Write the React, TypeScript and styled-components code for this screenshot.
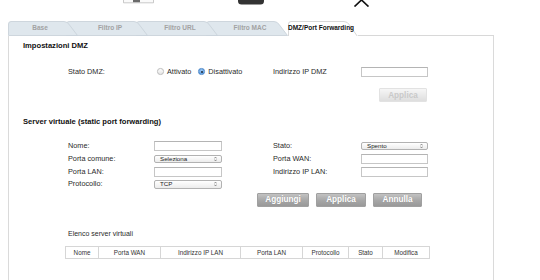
import React from "react";
import styled, { createGlobalStyle } from "styled-components";

const Global = createGlobalStyle`
  html, body { margin: 0; padding: 0; background: #fff; }
  body { font-family: "Liberation Sans", Arial, Helvetica, sans-serif; color: #222; }
  * { box-sizing: border-box; }
`;

const Page = styled.div`
  width: 540px;
  height: 280px;
  overflow: hidden;
  background: #fff;
`;

const TopStrip = styled.div`
  height: 21px;
  display: flex;
  align-items: flex-start;
`;

const TopIcon = styled.svg<{ $x: number }>`
  display: block;
  flex: none;
  margin-left: ${(p) => p.$x}px;
`;

const TabBar = styled.div`
  display: flex;
  margin-left: 8px;
  width: 486px;
  height: 15px;
`;

const Tab = styled.div<{ $overlap: boolean; $z: number }>`
  display: grid;
  flex: none;
  width: ${(p) => (p.$overlap ? 82 : 70)}px;
  height: 15px;
  margin-left: ${(p) => (p.$overlap ? -12 : 0)}px;
  z-index: ${(p) => p.$z};
  & > * { grid-area: 1 / 1; }
`;

const TabShape = styled.svg`
  display: block;
`;

const TabLabel = styled.span<{ $active: boolean; $overlap: boolean }>`
  align-self: center;
  justify-self: center;
  padding-left: ${(p) => (p.$overlap ? 12 : 0)}px;
  padding-right: 6px;
  font-size: 6.5px;
  font-weight: bold;
  color: ${(p) => (p.$active ? "#111" : "#a2a2a2")};
  white-space: nowrap;
  line-height: 1;
`;

const TabFiller = styled.div`
  flex: 1;
  border-bottom: 1px solid #d8d8d8;
`;

const Panel = styled.div`
  margin-left: 8px;
  width: 486px;
  height: 244px;
  border-left: 1px solid #dadada;
  border-right: 1px solid #dadada;
  padding-left: 14px;
  display: flex;
  flex-direction: column;
`;

const Heading = styled.div<{ $top: number }>`
  margin-top: ${(p) => p.$top}px;
  font-size: 7.6px;
  font-weight: bold;
  color: #111;
  line-height: 10px;
  height: 10px;
`;

const FormGrid = styled.div<{ $top: number }>`
  margin-top: ${(p) => p.$top}px;
  margin-left: 45px;
  display: grid;
  grid-template-columns: 86px 68px 51px 88px 67px;
  grid-auto-rows: 10px;
  row-gap: 2.8px;
  align-items: center;
`;

const Label = styled.span<{ $col: number }>`
  grid-column: ${(p) => p.$col};
  font-size: 7.3px;
  color: #2a2a2a;
  white-space: nowrap;
  line-height: 10px;
`;

const TextInput = styled.div<{ $col: number }>`
  grid-column: ${(p) => p.$col};
  height: 10px;
  border: 1px solid #c6c6c6;
  border-top-color: #b4b4b4;
  background: #fff;
`;

const Select = styled.div<{ $col: number; $h: number }>`
  grid-column: ${(p) => p.$col};
  height: ${(p) => p.$h}px;
  border: 1px solid #b2b2b2;
  border-radius: 2px;
  background: linear-gradient(#ffffff, #ececec);
  display: flex;
  align-items: center;
  justify-content: space-between;
  padding: 0 4px 0 5px;
  font-size: 6.2px;
  color: #222;
  line-height: 1;
`;

const RadioGroup = styled.div`
  grid-column: 2 / span 2;
  display: flex;
  align-items: center;
  padding-left: 3px;
`;

const Radio = styled.span<{ $checked: boolean }>`
  width: 6.5px;
  height: 6.5px;
  border-radius: 50%;
  flex: none;
  display: flex;
  align-items: center;
  justify-content: center;
  border: 0.8px solid ${(p) => (p.$checked ? "#4c86c8" : "#bcbcbc")};
  background: ${(p) =>
    p.$checked
      ? "radial-gradient(circle at 50% 35%, #9cc8f2, #4f95de)"
      : "linear-gradient(#fdfdfd, #e6e6e6)"};
  &::after {
    content: "";
    width: 2px;
    height: 2px;
    border-radius: 50%;
    background: ${(p) => (p.$checked ? "#1d2a3a" : "transparent")};
  }
`;

const RadioText = styled.span<{ $gap: number }>`
  font-size: 7.3px;
  color: #2a2a2a;
  margin-left: 3.5px;
  margin-right: ${(p) => p.$gap}px;
  white-space: nowrap;
`;

const ButtonRow = styled.div<{ $top: number; $width: number }>`
  margin-top: ${(p) => p.$top}px;
  margin-left: 45px;
  width: ${(p) => p.$width}px;
  display: flex;
  justify-content: flex-end;
  gap: 7px;
`;

const Button = styled.div<{ $w: number; $disabled?: boolean }>`
  width: ${(p) => p.$w}px;
  height: 14px;
  display: flex;
  align-items: center;
  justify-content: center;
  font-size: 8.2px;
  font-weight: bold;
  border-radius: 1px;
  color: ${(p) => (p.$disabled ? "#c9c9c9" : "#fff")};
  background: ${(p) =>
    p.$disabled
      ? "linear-gradient(#f6f6f6, #dedede)"
      : "linear-gradient(#c2c2c2, #a6a6a6 55%, #999999)"};
  border: 1px solid ${(p) => (p.$disabled ? "#e2e2e2" : "#a0a0a0")};
  text-shadow: ${(p) => (p.$disabled ? "none" : "0 0 1px rgba(0,0,0,0.15)")};
`;

const Caption = styled.div`
  margin-top: 22px;
  margin-left: 45px;
  font-size: 7px;
  color: #2a2a2a;
  line-height: 10px;
`;

const ListTable = styled.table`
  margin-top: 7px;
  margin-left: 42px;
  border-collapse: collapse;
  table-layout: fixed;
  width: 364px;
`;

const HeadCell = styled.th<{ $w: number }>`
  width: ${(p) => p.$w}px;
  height: 12px;
  padding: 0;
  border: 1px solid #d6d6d6;
  font-size: 6.3px;
  font-weight: normal;
  color: #333;
  text-align: center;
  white-space: nowrap;
`;

const SelectArrows = () => (
  <svg width="3" height="6" viewBox="0 0 3 6">
    <path d="M0.4 2.4 L1.5 1 L2.6 2.4 M0.4 3.6 L1.5 5 L2.6 3.6" fill="none" stroke="#555" strokeWidth="0.6" />
  </svg>
);

const tabs = ["Base", "Filtro IP", "Filtro URL", "Filtro MAC", "DMZ/Port Forwarding"];

function tabPath(w: number, closed: boolean) {
  const end = closed ? 14.5 : 15.5;
  return `M0.5 ${end} V3 Q0.5 0.5 3 0.5 H${w - 14} Q${w - 10.5} 0.5 ${w - 8.5} 4 L${w - 0.5} ${end}${closed ? " Z" : ""}`;
}

const columns: [string, number][] = [
  ["Nome", 33],
  ["Porta WAN", 62],
  ["Indirizzo IP LAN", 80],
  ["Porta LAN", 62],
  ["Protocollo", 46],
  ["Stato", 34],
  ["Modifica", 47],
];

export default function App() {
  return (
    <Page>
      <Global />
      <TopStrip>
        <TopIcon $x={123} width="31" height="4" viewBox="0 0 31 4">
          <path d="M0.5 -1 V2.8 H30.5 V-1" fill="#fafafa" stroke="#bdbdbd" strokeWidth="0.8" />
          <rect x="10" y="0" width="7" height="2.2" fill="#6a6a6a" />
        </TopIcon>
        <TopIcon $x={84} width="26" height="5" viewBox="0 0 26 5">
          <rect x="0" y="-4" width="26" height="8.5" rx="3.5" fill="#333" />
        </TopIcon>
        <TopIcon $x={89} width="17" height="7" viewBox="0 0 17 7">
          <path d="M8.5 0 L1.5 6.5 M8.5 0 L15.5 6.5" fill="none" stroke="#111" strokeWidth="1.7" />
        </TopIcon>
      </TopStrip>

      <TabBar>
        {tabs.map((t, i) => {
          const active = i === tabs.length - 1;
          const overlap = i > 0 && !active;
          const w = overlap ? 82 : 70;
          return (
            <Tab key={t} $overlap={overlap} $z={active ? 10 : 6 - i}>
              <TabShape width={w} height="15" viewBox={`0 0 ${w} 15`}>
                <path
                  d={tabPath(w, !active)}
                  fill={active ? "#ffffff" : "#dfe7ed"}
                  stroke={active ? "#d4d4d4" : "#c9d3da"}
                  strokeWidth="0.9"
                />
              </TabShape>
              <TabLabel $active={active} $overlap={overlap}>{t}</TabLabel>
            </Tab>
          );
        })}
        <TabFiller />
      </TabBar>

      <Panel>
        <Heading $top={4.5}>Impostazioni DMZ</Heading>

        <FormGrid $top={16}>
          <Label $col={1}>Stato DMZ:</Label>
          <RadioGroup>
            <Radio $checked={false} />
            <RadioText $gap={7}>Attivato</RadioText>
            <Radio $checked />
            <RadioText $gap={0}>Disattivato</RadioText>
          </RadioGroup>
          <Label $col={4}>Indirizzo IP DMZ</Label>
          <TextInput $col={5} />
        </FormGrid>

        <ButtonRow $top={11.5} $width={359}>
          <Button $w={48} $disabled>Applica</Button>
        </ButtonRow>

        <Heading $top={15}>Server virtuale (static port forwarding)</Heading>

        <FormGrid $top={14}>
          <Label $col={1}>Nome:</Label>
          <TextInput $col={2} />
          <Label $col={4}>Stato:</Label>
          <Select $col={5} $h={7.5}>
            <span>Spento</span>
            <SelectArrows />
          </Select>

          <Label $col={1}>Porta comune:</Label>
          <Select $col={2} $h={8.5}>
            <span>Seleziona</span>
            <SelectArrows />
          </Select>
          <Label $col={4}>Porta WAN:</Label>
          <TextInput $col={5} />

          <Label $col={1}>Porta LAN:</Label>
          <TextInput $col={2} />
          <Label $col={4}>Indirizzo IP LAN:</Label>
          <TextInput $col={5} />

          <Label $col={1}>Protocollo:</Label>
          <Select $col={2} $h={8.5}>
            <span>TCP</span>
            <SelectArrows />
          </Select>
        </FormGrid>

        <ButtonRow $top={3.6} $width={354}>
          <Button $w={52}>Aggiungi</Button>
          <Button $w={50}>Applica</Button>
          <Button $w={49}>Annulla</Button>
        </ButtonRow>

        <Caption>Elenco server virtuali</Caption>

        <ListTable>
          <thead>
            <tr>
              {columns.map(([c, w]) => (
                <HeadCell key={c} $w={w}>{c}</HeadCell>
              ))}
            </tr>
          </thead>
        </ListTable>
      </Panel>
    </Page>
  );
}
